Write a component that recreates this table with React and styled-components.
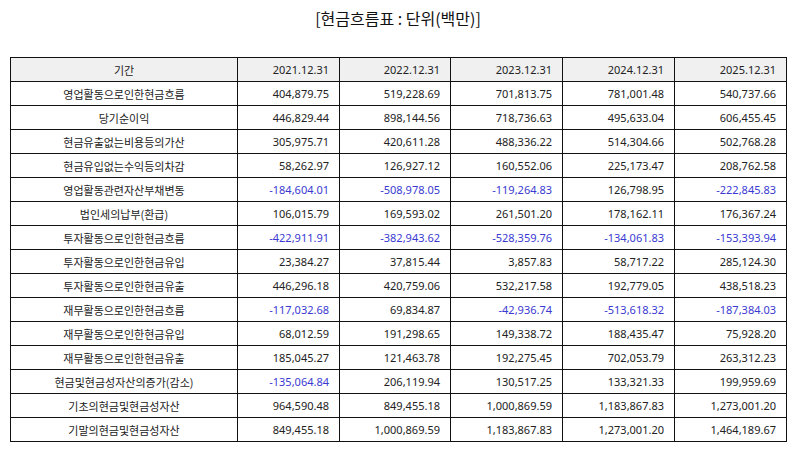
import React from "react";
import styled, { createGlobalStyle } from "styled-components";

const Global = createGlobalStyle`
  html, body { margin: 0; padding: 0; background: #fff; }
  body { font-family: "Noto Sans", "Noto Sans CJK KR", sans-serif; color: #222; }
`;

const Page = styled.div`
  width: 794px;
  padding: 7px 0 0 10px;
  box-sizing: border-box;
`;

const Title = styled.h1`
  margin: 0 0 28px 0;
  width: 776px;
  text-align: center;
  font-family: "Noto Sans CJK KR", sans-serif;
  font-weight: 400;
  font-size: 16px;
  line-height: 22px;
  color: #111;
`;

const Table = styled.table`
  border-collapse: collapse;
  width: 776px;
  table-layout: fixed;
  font-size: 11px;
`;

const Cell = styled.td`
  height: 23px;
  padding: 0 10px 0 4px;
  border: 1px solid #111;
  text-align: ${(p) => (p.$label ? "center" : "right")};
  ${(p) => p.$label && "padding: 0 4px;"}
  font-family: ${(p) => (p.$label ? '"Noto Sans CJK KR", sans-serif' : '"Noto Sans", "Noto Sans CJK KR", sans-serif')};
  color: ${(p) => (p.$neg ? "#3a3ad2" : "#222")};
  background: ${(p) => (p.$head ? "#f0f0f0" : "#fff")};
  white-space: nowrap;
  line-height: 14px;
`;

const widths = [227, 102, 111, 112, 112, 112];
const years = ["2021.12.31", "2022.12.31", "2023.12.31", "2024.12.31", "2025.12.31"];

const rows = [
  ["영업활동으로인한현금흐름", "404,879.75", "519,228.69", "701,813.75", "781,001.48", "540,737.66"],
  ["당기순이익", "446,829.44", "898,144.56", "718,736.63", "495,633.04", "606,455.45"],
  ["현금유출없는비용등의가산", "305,975.71", "420,611.28", "488,336.22", "514,304.66", "502,768.28"],
  ["현금유입없는수익등의차감", "58,262.97", "126,927.12", "160,552.06", "225,173.47", "208,762.58"],
  ["영업활동관련자산부채변동", "-184,604.01", "-508,978.05", "-119,264.83", "126,798.95", "-222,845.83"],
  ["법인세의납부(환급)", "106,015.79", "169,593.02", "261,501.20", "178,162.11", "176,367.24"],
  ["투자활동으로인한현금흐름", "-422,911.91", "-382,943.62", "-528,359.76", "-134,061.83", "-153,393.94"],
  ["투자활동으로인한현금유입", "23,384.27", "37,815.44", "3,857.83", "58,717.22", "285,124.30"],
  ["투자활동으로인한현금유출", "446,296.18", "420,759.06", "532,217.58", "192,779.05", "438,518.23"],
  ["재무활동으로인한현금흐름", "-117,032.68", "69,834.87", "-42,936.74", "-513,618.32", "-187,384.03"],
  ["재무활동으로인한현금유입", "68,012.59", "191,298.65", "149,338.72", "188,435.47", "75,928.20"],
  ["재무활동으로인한현금유출", "185,045.27", "121,463.78", "192,275.45", "702,053.79", "263,312.23"],
  ["현금및현금성자산의증가(감소)", "-135,064.84", "206,119.94", "130,517.25", "133,321.33", "199,959.69"],
  ["기초의현금및현금성자산", "964,590.48", "849,455.18", "1,000,869.59", "1,183,867.83", "1,273,001.20"],
  ["기말의현금및현금성자산", "849,455.18", "1,000,869.59", "1,183,867.83", "1,273,001.20", "1,464,189.67"],
];

export default function App() {
  return (
    <Page>
      <Global />
      <Title>[현금흐름표 : 단위(백만)]</Title>
      <Table>
        <colgroup>
          {widths.map((w, i) => (
            <col key={i} style={{ width: w }} />
          ))}
        </colgroup>
        <thead>
          <tr>
            <Cell as="th" $head $label style={{ fontWeight: 400 }}>기간</Cell>
            {years.map((y) => (
              <Cell as="th" $head key={y} style={{ fontWeight: 400 }}>{y}</Cell>
            ))}
          </tr>
        </thead>
        <tbody>
          {rows.map((r) => (
            <tr key={r[0]}>
              <Cell $label>{r[0]}</Cell>
              {r.slice(1).map((v, i) => (
                <Cell key={i} $neg={v.startsWith("-")}>{v}</Cell>
              ))}
            </tr>
          ))}
        </tbody>
      </Table>
    </Page>
  );
}
